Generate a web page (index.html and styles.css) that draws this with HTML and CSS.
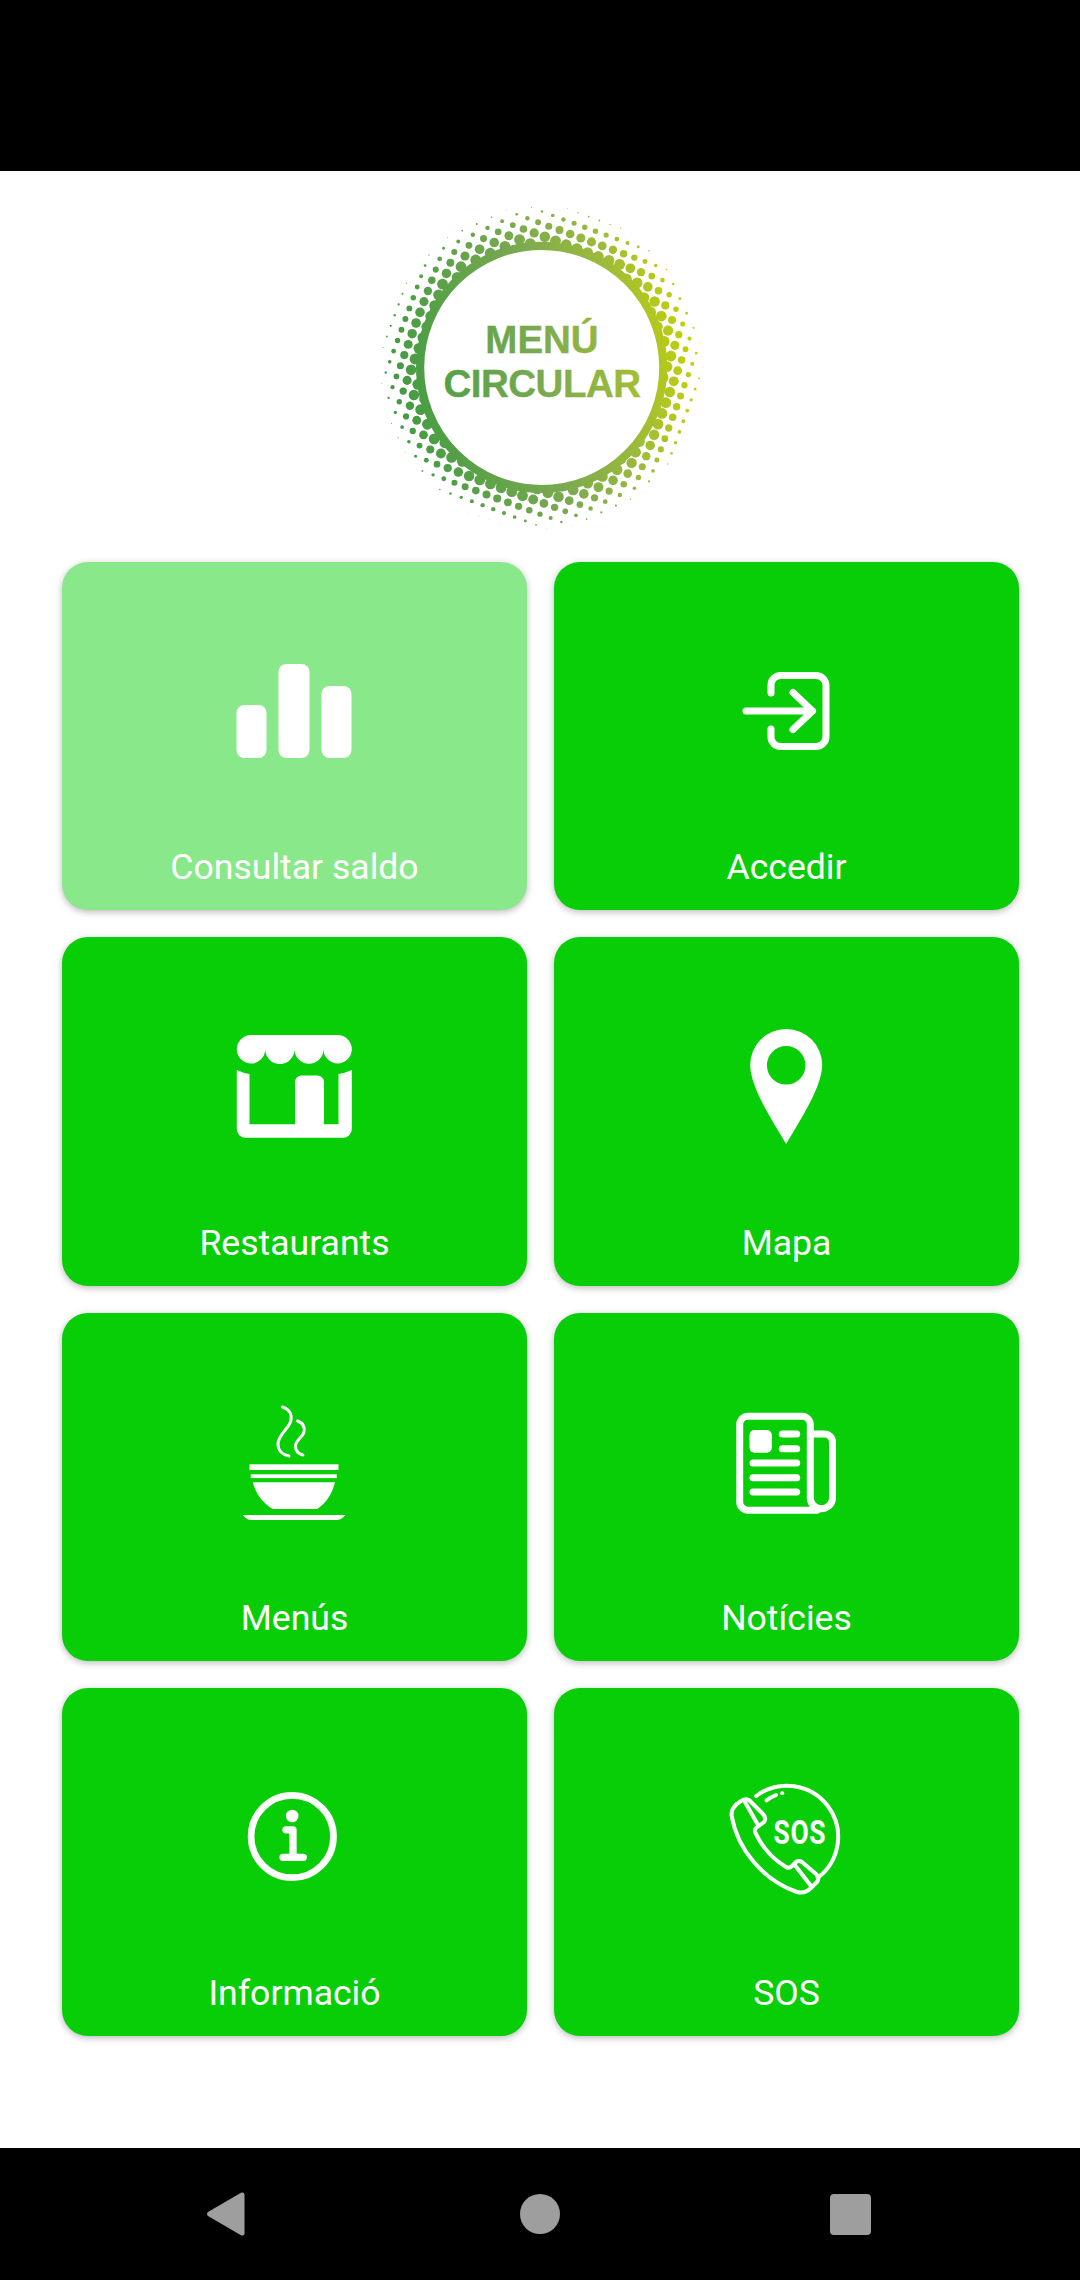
FILE: index.html
```html
<!DOCTYPE html>
<html lang="ca">

<head>
     <meta charset="UTF-8">
     <meta name="viewport" content="width=device-width, initial-scale=1.0">
     <title>Menú Circular</title>
     <link rel="stylesheet" href="styles.css">
</head>

<body>
     <div class="status-bar"></div>

     <main class="content">
          <svg class="logo" viewBox="0 0 340 340" role="img" aria-label="Menú Circular">
               <defs>
                    <linearGradient id="logoGrad" gradientUnits="userSpaceOnUse" x1="10" y1="200" x2="330" y2="140">
                         <stop offset="0" stop-color="#3c9a40" />
                         <stop offset="0.5" stop-color="#7aa950" />
                         <stop offset="0.75" stop-color="#9dbb3a" />
                         <stop offset="1" stop-color="#c8d400" />
                    </linearGradient>
               </defs>
               <g id="logoDots" fill="url(#logoGrad)"></g>
               <circle cx="170.7" cy="170.4" r="121.6" fill="#ffffff" stroke="url(#logoGrad)" stroke-width="8.2" />
               <text class="logo-text" x="171" y="155.7" fill="url(#logoGrad)" stroke="url(#logoGrad)">MENÚ</text>
               <text class="logo-text logo-text-long" x="171" y="199.7" fill="url(#logoGrad)" stroke="url(#logoGrad)">CIRCULAR</text>
          </svg>

          <div class="menu-grid">
               <div class="menu-card menu-card-light">
                    <svg class="menu-icon" viewBox="0 0 130 130">
                         <rect x="7.5" y="58" width="30" height="53" rx="8" fill="#fff" />
                         <rect x="49.5" y="17" width="31" height="94" rx="8" fill="#fff" />
                         <rect x="92.5" y="39" width="30" height="72" rx="8" fill="#fff" />
                    </svg>
                    <span class="menu-label">Consultar saldo</span>
               </div>

               <div class="menu-card">
                    <svg class="menu-icon" viewBox="0 0 130 130">
                         <g fill="none" stroke="#fff" stroke-width="7" stroke-linecap="round" stroke-linejoin="round">
                              <path d="M50 46V38a9.5 9.5 0 0 1 9.5-9.5H95a10 10 0 0 1 10 10V89.500a10 10 0 0 1-10 10H59.500a9.500 9.500 0 0 1-9.500-9.500V82" />
                              <path d="M25 64H91.500M72 45.500 91.500 64 72 82.500" />
                         </g>
                    </svg>
                    <span class="menu-label">Accedir</span>
               </div>

               <div class="menu-card">
                    <svg class="menu-icon" viewBox="0 0 130 130">
                         <path fill="#fff" d="M22 13H108.500A14.300 14.300 0 0 1 122.800 27.300A14.150 14.150 0 0 1 94.500 27.300A14.500 14.500 0 0 1 65.500 27.300A14.650 14.650 0 0 1 36.200 27.300A14.200 14.200 0 0 1 7.800 27.300A14.300 14.300 0 0 1 22 13Z" />
                         <path fill="#fff" d="M7.800 48Q14 51 20.500 52V102.300H66V60a6.500 6.500 0 0 1 6.500-6.500H88.500a6.500 6.500 0 0 1 6.500 6.500V102.300H109.500V52Q116 51 122.800 48V107a8.700 8.700 0 0 1-8.700 8.700H16.500a8.700 8.700 0 0 1-8.700-8.700Z" />
                    </svg>
                    <span class="menu-label">Restaurants</span>
               </div>

               <div class="menu-card">
                    <svg class="menu-icon" viewBox="0 0 130 130">
                         <path fill="#fff" fill-rule="evenodd" d="M65.200 122C52 100 29.200 65 29.200 43A36 36 0 0 1 101.200 43C101.200 65 78 100 65.200 122ZM65.200 24A19.300 19.300 0 1 0 65.200 62.600A19.300 19.300 0 1 0 65.200 24Z" />
                    </svg>
                    <span class="menu-label">Mapa</span>
               </div>

               <div class="menu-card">
                    <svg class="menu-icon" viewBox="0 0 130 130">
                         <g fill="none" stroke="#fff" stroke-width="3" stroke-linecap="round">
                              <path d="M53.500 9C60 11 63 16 62 22C61 30 49 36 49 46C49 53 54 57 60 58" />
                              <path d="M68.500 23C74 25 76 29 75 34C74 39 66.500 42 66.500 48C66.500 53 70 56 74 57" />
                         </g>
                         <rect x="20.500" y="66.300" width="89" height="5.700" fill="#fff" />
                         <rect x="21.800" y="76.300" width="86" height="3.800" fill="#fff" />
                         <path fill="#fff" d="M23.800 84.300H106C103 97 96 106 88 111H43.800C35 106 27 97 23.800 84.300Z" />
                         <path fill="#fff" d="M13.800 117H116.500C114 120 111 122 107 122H23C19 122 16 120 13.800 117Z" />
                    </svg>
                    <span class="menu-label">Menús</span>
               </div>

               <div class="menu-card">
                    <svg class="menu-icon" viewBox="0 0 130 130">
                         <g fill="none" stroke="#fff" stroke-width="7" stroke-linecap="round" stroke-linejoin="round">
                              <path d="M96 112.200H27a8.300 8.300 0 0 1-8.300-8.300V26.500a8.300 8.300 0 0 1 8.300-8.300H81a8.300 8.300 0 0 1 8.300 8.300V101a11.200 11.200 0 0 0 22.200 0V44a8 8 0 0 0-8-8H90" />
                              <path d="M61.300 36H75.700M61.300 50.700H75.700M32 65H75.700M32 79.700H75.700M32 94H75.700" />
                         </g>
                         <rect x="28.500" y="32" width="22.300" height="22.700" rx="5" fill="#fff" />
                    </svg>
                    <span class="menu-label">Notícies</span>
               </div>

               <div class="menu-card">
                    <svg class="menu-icon" viewBox="0 0 130 130">
                         <circle cx="63.300" cy="63.500" r="41.200" fill="none" stroke="#fff" stroke-width="6.700" />
                         <circle cx="63.200" cy="43" r="6.300" fill="#fff" />
                         <path d="M57 56.800H64V84M54 84.300H74.300" fill="none" stroke="#fff" stroke-width="7.300" stroke-linecap="round" stroke-linejoin="round" />
                    </svg>
                    <span class="menu-label">Informació</span>
               </div>

               <div class="menu-card">
                    <svg class="menu-icon" viewBox="0 0 130 130">
                         <g fill="none" stroke="#fff" stroke-width="4" stroke-linecap="round" stroke-linejoin="round">
                              <path d="M35.200 23A50 50 0 0 1 96.800 104.700" />
                              <path d="M45.500 27.300Q50 24 55.200 22" />
                              <path d="M20 28Q24 25 28 27L41 40Q46 45 43 49L35 55Q33 57 34.500 60Q45 82 65 94Q68 96 71 93L75 89Q78 87 81 89L95 101Q99 105 96 109L90 115Q84 121 76 119Q50 110 32 88Q15 68 10.500 42Q10 34 20 28Z" />
                              <path d="M24 29L37 52M73 91L90 113" />
                         </g>
                         <circle cx="61.200" cy="20.300" r="2" fill="#fff" />
                         <text class="sos-text" transform="translate(78.500 71.300) scale(0.8 1)" textLength="65">SOS</text>
                    </svg>
                    <span class="menu-label">SOS</span>
               </div>
          </div>
     </main>

     <nav class="nav-bar">
          <svg class="nav-back" viewBox="0 0 42 44">
               <path fill="#9e9e9e" d="M1 20 34 .8Q37-.5 37.500 2.500V41.500Q37 44.500 34 43.200L1 24Q-1 22 1 20Z" />
          </svg>
          <div class="nav-home"></div>
          <div class="nav-recent"></div>
     </nav>

     <script src="logo.js"></script>
</body>

</html>
```

FILE: styles.css
```css
/* Base styles */
body {
     background-color: #ffffff;
     color: #ffffff;
     font-family: Roboto, Arial, sans-serif;
     display: flex;
     flex-direction: column;
     width: 1080px;
     height: 2280px;
     margin: 0;
     overflow: hidden;
}

.status-bar {
     height: 171px;
     background-color: #000000;
}

.content {
     flex: 1;
     display: flex;
     flex-direction: column;
     padding: 26px 61px 0 62px;
}

/* Logo */
.logo {
     display: block;
     width: 340px;
     height: 340px;
     margin: 0 auto 25px;
}

.logo-text {
     font-family: "Liberation Sans", Arial, sans-serif;
     font-weight: 700;
     font-size: 38.5px;
     stroke-width: 0.4px;
     text-anchor: middle;
}

.logo-text-long {
     letter-spacing: -0.5px;
}

/* Menu cards */
.menu-grid {
     display: grid;
     grid-template-columns: 465px 465px;
     grid-auto-rows: 348.33px;
     gap: 27px;
}

.menu-card {
     display: flex;
     flex-direction: column;
     align-items: center;
     padding: 85px 0 23px;
     box-sizing: border-box;
     background-color: #08ce08;
     border-radius: 26px;
     box-shadow: 0 2px 7px rgba(0, 0, 0, 0.28);
}

.menu-card-light {
     background-color: #89e889;
}

.menu-icon {
     display: block;
     width: 130px;
     height: 130px;
     margin-right: 1px;
}

.menu-label {
     margin-top: auto;
     font-size: 35.6px;
     line-height: 40px;
}

.sos-text {
     fill: #ffffff;
     font-family: Roboto, Arial, sans-serif;
     font-weight: 700;
     font-size: 33px;
     text-anchor: middle;
}

/* Bottom navigation */
.nav-bar {
     height: 132px;
     display: flex;
     justify-content: space-between;
     align-items: center;
     padding: 0 209px 0 207px;
     background-color: #000000;
}

.nav-back {
     display: block;
     width: 42px;
     height: 44px;
}

.nav-home {
     width: 40px;
     height: 40px;
     border-radius: 50%;
     background-color: #9e9e9e;
}

.nav-recent {
     width: 41px;
     height: 41px;
     border-radius: 4px;
     background-color: #9e9e9e;
}
```

FILE: logo.js
```js
// Halftone dots around the logo ring, they get smaller going outwards
const dotsGroup = document.getElementById('logoDots');
const centerX = 170.7;
const centerY = 170.4;
const stepX = 10.69;
const stepY = 3.93;
// one known dot, used as the origin of the rotated grid
const originX = 526.7 - 370.3;
const originY = 218.3 - 197;

for (let i = -30; i <= 30; i++) {
     for (let j = -30; j <= 30; j++) {
          const x = originX + i * stepX - j * stepY;
          const y = originY + i * stepY + j * stepX;
          const dist = Math.hypot(x - centerX, y - centerY);
          if (dist < 118 || dist > 163) continue;

          const dot = document.createElementNS('http://www.w3.org/2000/svg', 'circle');
          dot.setAttribute('cx', x.toFixed(2));
          dot.setAttribute('cy', y.toFixed(2));
          dot.setAttribute('r', Math.min(5.4, 0.16 * (163.5 - dist)).toFixed(2));
          dotsGroup.appendChild(dot);
     }
}
```
